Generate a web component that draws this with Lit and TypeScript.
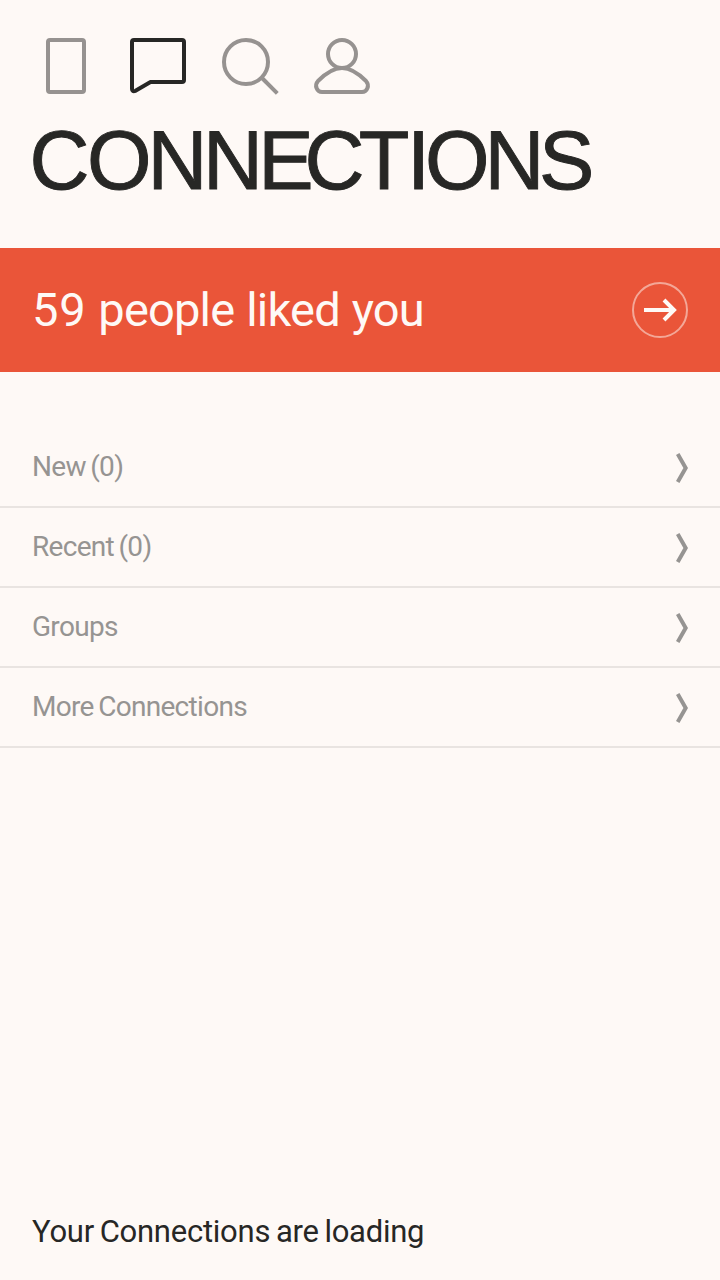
import { LitElement, html, css } from "lit";
import { customElement, state } from "lit/decorators.js";

// Title letters paired with their tracking in pixels.
const TITLE: [string, number][] = [
  ["C", -2.4], ["O", -4.2], ["N", -4.3], ["N", -4.7], ["E", -9.2], ["C", -5.6],
  ["T", -2.6], ["I", -5], ["O", -5], ["N", -5.4], ["S", 0],
];

@customElement("app-root")
export class AppRoot extends LitElement {
  static styles = css`
    :host {
      display: flex;
      flex-direction: column;
      box-sizing: border-box;
      width: 100%;
      height: 100vh;
      overflow: hidden;
      background: #fef9f6;
      color: #272725;
      font-family: Roboto, "Liberation Sans", Arial, sans-serif;
    }
    svg { display: block; fill: none; }
    nav {
      display: flex;
      gap: 28px;
      padding: 34px 32px 0 34px;
      height: 64px;
      color: #969290;
    }
    .tab { width: 64px; height: 64px; }
    .active { color: #272725; }
    h1 {
      margin: 0;
      height: 150px;
      padding-left: 29.5px;
      font-family: "Liberation Sans", Arial, sans-serif;
      font-size: 83px;
      line-height: 126px;
      font-weight: 400;
      font-kerning: none;
      -webkit-text-stroke: 0.9px currentColor;
      white-space: nowrap;
    }
    .banner {
      display: flex;
      align-items: center;
      justify-content: space-between;
      height: 124px;
      padding: 0 32px;
      background: #ea5539;
      color: #fef9f6;
      font-size: 47px;
      letter-spacing: -0.8px;
      word-spacing: 1px;
    }
    .likes { padding-bottom: 2px; }
    .count { letter-spacing: 0.8px; }
    .list { margin-top: 56px; }
    .row {
      display: flex;
      align-items: center;
      justify-content: space-between;
      box-sizing: border-box;
      height: 80px;
      padding: 0 32px;
      border-bottom: 2px solid #e9e4e1;
      color: #969492;
      font-size: 28px;
      letter-spacing: -0.7px;
      word-spacing: -1.8px;
    }
    .label { padding-bottom: 2px; }
    .row svg { margin-top: 2px; }
    .status {
      margin-top: auto;
      padding: 0 32px 30px;
      font-size: 31px;
      line-height: 36px;
      letter-spacing: -0.25px;
      word-spacing: -1.7px;
    }
  `;

  @state() private rows = ["New (0)", "Recent (0)", "Groups", "More Connections"];

  render() {
    return html`
      <nav>
        <svg class="tab" viewBox="0 0 64 64" stroke="currentColor" stroke-width="4">
          <rect x="14" y="6" width="36" height="52" rx="2" />
        </svg>
        <svg class="tab active" viewBox="0 0 64 64" stroke="currentColor" stroke-width="4" stroke-linejoin="round">
          <path d="M8 6H56a2 2 0 0 1 2 2V46a2 2 0 0 1-2 2H24.500L9.500 56.800Q6 58 6 55V8a2 2 0 0 1 2-2Z" />
        </svg>
        <svg class="tab" viewBox="0 0 64 64" stroke="currentColor" stroke-width="4">
          <circle cx="28" cy="28" r="22" />
          <path d="M44 44L59.300 59.300" />
        </svg>
        <svg class="tab" viewBox="0 0 64 64" stroke="currentColor" stroke-width="4">
          <circle cx="32" cy="20" r="14" />
          <path d="M32 34C41 34 49 40 56 47C60 51.500 57 58 52 58H12C7 58 4 51.500 8 47C15 40 23 34 32 34Z" />
        </svg>
      </nav>
      <h1>${TITLE.map(([c, s]) => html`<span style="letter-spacing:${s}px">${c}</span>`)}</h1>
      <div class="banner">
        <div class="likes"><span class="count">59</span> people liked you</div>
        <svg width="56" height="56" viewBox="0 0 56 56" stroke="currentColor">
          <circle cx="28" cy="28" r="27" stroke-width="2" opacity=".5" />
          <path d="M12 28H43M32 18L42 28L32 38" stroke-width="4" />
        </svg>
      </div>
      <div class="list">
        ${this.rows.map(
          (label) => html`<div class="row">
            <span class="label">${label}</span>
            <svg width="12" height="30" viewBox="0 0 12 30" stroke="currentColor" stroke-width="4">
              <path d="M1.700 1L9.700 15L1.700 29" />
            </svg>
          </div>`
        )}
      </div>
      <div class="status">Your Connections are loading</div>
    `;
  }
}
